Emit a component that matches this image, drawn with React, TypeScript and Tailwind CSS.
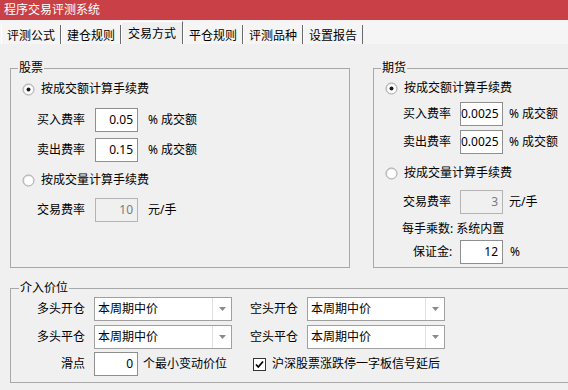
import React from "react";

const TABS = ["评测公式", "建仓规则", "交易方式", "平仓规则", "评测品种", "设置报告"];
const ACTIVE = 2;

function Radio({ checked }: { checked?: boolean }) {
  return (
    <svg width="13" height="13" viewBox="0 0 13 13" className="shrink-0">
      <defs>
        <linearGradient id="rg" x1="0" y1="0" x2="1" y2="1">
          <stop offset="0" stopColor="#dcdcdc" />
          <stop offset="1" stopColor="#ffffff" />
        </linearGradient>
      </defs>
      <circle cx="6.5" cy="6.5" r="5.5" fill="url(#rg)" stroke="#a5a5a5" />
      <circle cx="6.5" cy="6.5" r="4" fill="#fff" />
      {checked && <circle cx="6.5" cy="6.5" r="2" fill="#1a1a1a" />}
    </svg>
  );
}

function Check() {
  return (
    <svg width="13" height="13" viewBox="0 0 13 13" className="shrink-0">
      <rect x="0.5" y="0.5" width="12" height="12" fill="#fff" stroke="#333" />
      <path d="M3 6.5 L5.3 9 L10 3.5" fill="none" stroke="#000" strokeWidth="1.8" />
    </svg>
  );
}

function Box({ value, disabled, w = "w-[43px]" }: { value: string; disabled?: boolean; w?: string }) {
  return (
    <div
      className={`${w} h-[24px] shrink-0 border text-right pr-[4px] leading-[22px] ${
        disabled ? "bg-[#f0f0f0] border-[#b4b4b4] text-[#7a7a7a]" : "bg-white border-[#8f8f8f]"
      }`}
    >
      {value}
    </div>
  );
}

function Combo() {
  return (
    <div className="w-[138px] h-[24px] shrink-0 bg-white border border-[#a0a0a0] flex">
      <span className="flex-1 pl-[3px] leading-[22px]">本周期中价</span>
      <span className="w-[19px] border-l border-[#e0e0e0] flex items-center justify-center">
        <svg width="7" height="4" viewBox="0 0 7 4">
          <path d="M0 0 L7 0 L3.5 4 Z" fill="#8a8a8a" />
        </svg>
      </span>
    </div>
  );
}

function RateRow({ label, value, unit, pl, lw, gap, className = "" }: {
  label: string; value: string; unit: string; pl: string; lw: string; gap: string; className?: string;
}) {
  return (
    <div className={`flex items-center h-[24px] ${pl} ${className}`}>
      <span className={`${lw} shrink-0`}>{label}</span>
      <Box value={value} />
      <span className={gap}>{unit}</span>
    </div>
  );
}

export default function App() {
  return (
    <div className="w-[568px] h-[390px] overflow-hidden bg-[#f0f0f0] text-[12px] leading-[16px] text-black font-['Noto_Sans','Noto_Sans_CJK_SC',sans-serif]">
      <div className="h-[20px] bg-[#c94047] pl-[4px] flex items-center text-white">程序交易评测系统</div>

      <div className="h-[24px] flex items-end pl-[1px] bg-[#f5f5f5]">
        {TABS.map((t, i) =>
          i === ACTIVE ? (
            <div
              key={t}
              className="h-[23px] px-[6px] pt-[4px] bg-[#f0f0f0] border-l border-t border-r border-l-white border-t-white border-r-[#6a6a6a]"
            >
              {t}
            </div>
          ) : (
            <div key={t} className="h-[19px] px-[5px] pt-[3px] border-l border-r border-l-white border-r-[#6a6a6a]">
              {t}
            </div>
          )
        )}
      </div>

      <div className="pl-[10px] pt-[16px]">
        <div className="flex gap-[23px]">
          <fieldset className="w-[340px] h-[208px] shrink-0 border border-[#a8a8a8]">
            <legend className="ml-[7px] px-[1px] leading-[16px]">股票</legend>
            <div className="mt-[5px] pl-[11px] flex items-center h-[16px]">
              <Radio checked />
              <span className="ml-[6px]">按成交额计算手续费</span>
            </div>
            <RateRow className="mt-[11px]" label="买入费率" value="0.05" unit="% 成交额" pl="pl-[26px]" lw="w-[58px]" gap="ml-[10px]" />
            <RateRow className="mt-[6px]" label="卖出费率" value="0.15" unit="% 成交额" pl="pl-[26px]" lw="w-[58px]" gap="ml-[10px]" />
            <div className="mt-[10px] pl-[11px] flex items-center h-[16px]">
              <Radio />
              <span className="ml-[6px]">按成交量计算手续费</span>
            </div>
            <div className="mt-[10px] pl-[26px] flex items-center h-[24px]">
              <span className="w-[58px] shrink-0">交易费率</span>
              <Box value="10" disabled />
              <span className="ml-[10px]">元/手</span>
            </div>
          </fieldset>

          <fieldset className="w-[230px] h-[208px] shrink-0 border border-[#a8a8a8]">
            <legend className="ml-[7px] px-[1px] leading-[16px]">期货</legend>
            <div className="mt-[4px] pl-[11px] flex items-center h-[16px]">
              <Radio checked />
              <span className="ml-[6px]">按成交额计算手续费</span>
            </div>
            <RateRow className="mt-[6px]" label="买入费率" value="0.0025" unit="% 成交额" pl="pl-[29px]" lw="w-[57px]" gap="ml-[6px]" />
            <RateRow className="mt-[4px]" label="卖出费率" value="0.0025" unit="% 成交额" pl="pl-[29px]" lw="w-[57px]" gap="ml-[6px]" />
            <div className="mt-[11px] pl-[11px] flex items-center h-[16px]">
              <Radio />
              <span className="ml-[6px]">按成交量计算手续费</span>
            </div>
            <div className="mt-[9px] pl-[29px] flex items-center h-[24px]">
              <span className="w-[57px] shrink-0">交易费率</span>
              <Box value="3" disabled />
              <span className="ml-[6px]">元/手</span>
            </div>
            <div className="mt-[7px] pl-[28px] h-[16px]">每手乘数: 系统内置</div>
            <div className="mt-[3px] pl-[29px] flex items-center h-[24px]">
              <span className="w-[57px] shrink-0 pl-[10px]">保证金:</span>
              <Box value="12" />
              <span className="ml-[7px]">%</span>
            </div>
          </fieldset>
        </div>

        <fieldset className="mt-[12px] w-[590px] h-[103px] border border-[#a8a8a8]">
          <legend className="ml-[8px] px-[1px] leading-[16px]">介入价位</legend>
          <div className="mt-[1px] pl-[26px] flex items-center h-[24px]">
            <span className="w-[48px] text-right shrink-0">多头开仓</span>
            <div className="ml-[9px]"><Combo /></div>
            <span className="ml-[18px] w-[48px] text-right shrink-0">空头开仓</span>
            <div className="ml-[9px]"><Combo /></div>
          </div>
          <div className="mt-[4px] pl-[26px] flex items-center h-[24px]">
            <span className="w-[48px] text-right shrink-0">多头平仓</span>
            <div className="ml-[9px]"><Combo /></div>
            <span className="ml-[18px] w-[48px] text-right shrink-0">空头平仓</span>
            <div className="ml-[9px]"><Combo /></div>
          </div>
          <div className="mt-[3px] pl-[26px] flex items-center h-[24px]">
            <div className="w-[213px] flex items-center shrink-0">
              <span className="w-[48px] text-right shrink-0">滑点</span>
              <div className="ml-[9px]"><Box value="0" w="w-[44px]" /></div>
              <span className="ml-[5px]">个最小变动价位</span>
            </div>
            <div className="ml-[3px] flex items-center">
              <Check />
              <span className="ml-[6px]">沪深股票涨跌停一字板信号延后</span>
            </div>
          </div>
        </fieldset>
      </div>
    </div>
  );
}
